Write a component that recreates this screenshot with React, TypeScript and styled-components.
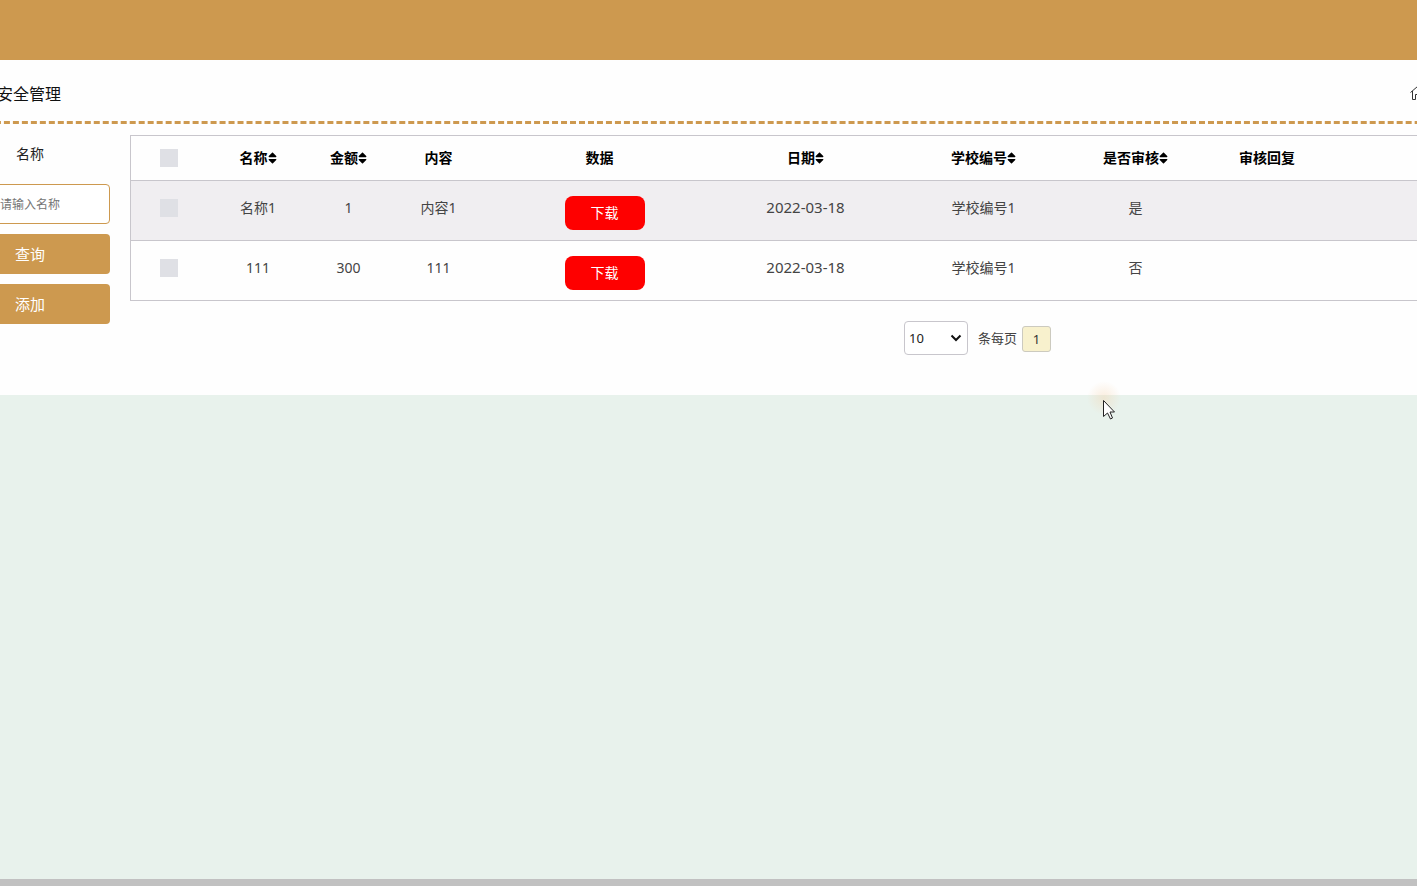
import React from "react";
import styled, { createGlobalStyle, css } from "styled-components";

const gold = "#cd994f";
const line = "#c8c6cc";

const GlobalStyle = createGlobalStyle`
  * { box-sizing: border-box; }
  body {
    margin: 0;
    background: #e8f2ec;
    color: #444;
    font-family: "Noto Sans", "Noto Sans CJK SC", sans-serif;
    font-size: 14px;
    line-height: 20px;
  }
  button, input, select { font: inherit; }
`;

const Viewport = styled.div`
  position: relative;
  display: flex;
  flex-direction: column;
  min-height: 100vh;
  overflow: hidden;
`;

const TopBar = styled.header`
  height: 60px;
  background: ${gold};
`;

/* The page is wider than the window and scrolled sideways. */
const Panel = styled.main`
  width: calc(100% + 458px);
  margin-left: -50px;
  padding-bottom: 40px;
  background: #fefefe;
`;

const TitleBar = styled.div`
  display: flex;
  align-items: center;
  justify-content: space-between;
  height: 64px;
  padding: 6px 400px 0 47px;
  border-bottom: 3px dashed ${gold};
`;

const Title = styled.h1`
  margin: 0;
  color: #111;
  font-size: 16px;
  font-weight: 400;
  line-height: 24px;
`;

const HomeLink = styled.a`
  display: flex;
  color: #333;
`;

const Content = styled.div`
  display: flex;
  gap: 20px;
  padding-top: 10px;
`;

const Filters = styled.form`
  display: flex;
  flex-direction: column;
  flex: none;
  gap: 10px;
  width: 160px;
`;

const FilterLabel = styled.label`
  color: #222;
  line-height: 40px;
  text-align: center;
`;

const FilterInput = styled.input`
  height: 40px;
  border: 1px solid ${gold};
  border-radius: 4px;
  background: #fff;
  font-size: 12px;
  text-align: center;
  &::placeholder { color: #757575; }
`;

const FilterButton = styled.button`
  height: 40px;
  padding: 0;
  border: 0;
  border-radius: 4px;
  background: ${gold};
  color: #fff;
  font-size: 15px;
`;

const Records = styled.section`
  flex: 1;
  padding-top: 1px;
`;

const Table = styled.table`
  width: 100%;
  border: 1px solid ${line};
  border-spacing: 0;
  table-layout: fixed;
`;

const Col = styled.col<{ $width?: number }>`
  ${(p) => p.$width && css`width: ${p.$width}px;`}
`;

const HeadCell = styled.th`
  height: 45px;
  padding: 0;
  border-bottom: 1px solid ${line};
  color: #000;
  font-weight: 700;
  vertical-align: middle;
`;

const Cell = styled.td<{ $large?: boolean }>`
  height: 60px;
  padding: 17px 0 0;
  font-size: ${(p) => (p.$large ? 15 : 14)}px;
  line-height: ${(p) => (p.$large ? 18 : 20)}px;
  text-align: center;
  vertical-align: top;
`;

const ActionCell = styled(Cell)`
  padding: 15px 0 0 10px;
`;

const Row = styled.tr<{ $shaded?: boolean }>`
  background: ${(p) => (p.$shaded ? "#f0eef1" : "#fefefe")};
  &:not(:last-child) td { border-bottom: 1px solid ${line}; }
  &:last-child td { height: 59px; }
`;

const Check = styled.input`
  display: block;
  width: 18px;
  height: 18px;
  margin: 1px auto;
  appearance: none;
  background: #dfe0e5;
`;

const SortButton = styled.button`
  display: inline-flex;
  align-items: center;
  padding: 0;
  border: 0;
  background: none;
  color: inherit;
`;

const DownloadButton = styled.button`
  display: block;
  width: 80px;
  height: 34px;
  margin: 0 auto;
  padding: 0;
  border: 0;
  border-radius: 8px;
  background: #fe0000;
  color: #fff;
`;

const Pagination = styled.nav`
  display: flex;
  align-items: center;
  justify-content: center;
  margin-top: 20px;
  font-size: 13px;
`;

const PageSizeLabel = styled.label`
  display: flex;
  align-items: center;
  gap: 10px;
`;

const SelectBox = styled.span`
  display: grid;
  align-items: center;
  > * { grid-area: 1 / 1; }
  > svg {
    justify-self: end;
    margin-right: 6px;
    pointer-events: none;
  }
`;

const PageSize = styled.select`
  width: 64px;
  height: 34px;
  padding: 0 4px;
  appearance: none;
  border: 1px solid ${line};
  border-radius: 4px;
  background: #fff;
  color: #222;
`;

const PageButton = styled.button`
  width: 29px;
  height: 26px;
  margin: 2px 0 0 5px;
  padding: 0;
  border: 1px solid #cccabf;
  border-radius: 3px;
  background: #f8f1cd;
  color: #333;
`;

const Scrollbar = styled.div`
  height: 7px;
  margin-top: auto;
  background: #c1c1c1;
`;

const Pointer = styled.svg`
  position: absolute;
  top: 380px;
  left: 1086px;
  pointer-events: none;
`;

const SortIcon = () => (
  <svg width="9" height="14" viewBox="0 0 320 512" fill="currentColor" aria-hidden="true">
    <path d="M41 288h238c21.4 0 32.1 25.9 17 41L177 448c-9.4 9.4-24.6 9.4-33.9 0L24 329c-15.1-15.1-4.4-41 17-41zm255-105L177 64c-9.4-9.4-24.6-9.4-33.9 0L24 183c-15.1 15.1-4.4 41 17 41h238c21.4 0 32.1-25.9 17-41z" />
  </svg>
);

const HomeIcon = () => (
  <svg width="15" height="16" viewBox="0 0 15 16" fill="none" stroke="currentColor" aria-hidden="true">
    <path d="M.5 6.500 7.500.5 14.500 6.500M2.500 5V13.500H5.500V8.500H9.500V13.500H12.500V5" />
  </svg>
);

const ChevronIcon = () => (
  <svg width="12" height="8" viewBox="0 0 12 8" fill="none" stroke="#111" strokeWidth="2" aria-hidden="true">
    <path d="M1.500 1.500 6 6 10.500 1.500" />
  </svg>
);

const columns = [
  { title: "名称", width: 102, sortable: true },
  { title: "金额", width: 79, sortable: true },
  { title: "内容", width: 101 },
  { title: "数据", width: 221 },
  { title: "日期", width: 191, sortable: true },
  { title: "学校编号", width: 165, sortable: true },
  { title: "是否审核", width: 139, sortable: true },
  { title: "审核回复", width: 124 },
];

const records = [
  { name: "名称1", amount: "1", content: "内容1", date: "2022-03-18", school: "学校编号1", reviewed: "是" },
  { name: "111", amount: "300", content: "111", date: "2022-03-18", school: "学校编号1", reviewed: "否" },
];

export default function App() {
  return (
    <>
      <GlobalStyle />
      <Viewport>
        <TopBar />
        <Panel>
          <TitleBar>
            <Title>安全管理</Title>
            <HomeLink href="#" aria-label="首页"><HomeIcon /></HomeLink>
          </TitleBar>
          <Content>
            <Filters onSubmit={(e) => e.preventDefault()}>
              <FilterLabel htmlFor="name">名称</FilterLabel>
              <FilterInput id="name" placeholder="请输入名称" />
              <FilterButton type="submit">查询</FilterButton>
              <FilterButton type="button">添加</FilterButton>
            </Filters>
            <Records>
              <Table>
                <colgroup>
                  <Col $width={76} />
                  {columns.map((c) => <Col key={c.title} $width={c.width} />)}
                  <Col />
                </colgroup>
                <thead>
                  <tr>
                    <HeadCell><Check type="checkbox" aria-label="全选" /></HeadCell>
                    {columns.map((c) => (
                      <HeadCell key={c.title} scope="col">
                        {c.sortable ? <SortButton type="button">{c.title}<SortIcon /></SortButton> : c.title}
                      </HeadCell>
                    ))}
                    <HeadCell />
                  </tr>
                </thead>
                <tbody>
                  {records.map((r, i) => (
                    <Row key={r.name} $shaded={i % 2 === 0}>
                      <Cell><Check type="checkbox" aria-label={r.name} /></Cell>
                      <Cell>{r.name}</Cell>
                      <Cell>{r.amount}</Cell>
                      <Cell>{r.content}</Cell>
                      <ActionCell><DownloadButton type="button">下载</DownloadButton></ActionCell>
                      <Cell $large>{r.date}</Cell>
                      <Cell>{r.school}</Cell>
                      <Cell>{r.reviewed}</Cell>
                      <Cell />
                      <Cell />
                    </Row>
                  ))}
                </tbody>
              </Table>
              <Pagination>
                <PageSizeLabel>
                  <SelectBox>
                    <PageSize defaultValue="10">
                      <option>10</option>
                      <option>25</option>
                      <option>50</option>
                    </PageSize>
                    <ChevronIcon />
                  </SelectBox>
                  条每页
                </PageSizeLabel>
                <PageButton type="button">1</PageButton>
              </Pagination>
            </Records>
          </Content>
        </Panel>
        <Scrollbar />
        <Pointer width="36" height="44" viewBox="0 0 36 44" aria-hidden="true">
          <defs>
            <radialGradient id="glow">
              <stop offset="0" stopColor="#f5d3ad" stopOpacity=".4" />
              <stop offset="1" stopColor="#f5d3ad" stopOpacity="0" />
            </radialGradient>
          </defs>
          <circle cx="18" cy="18" r="17" fill="url(#glow)" />
          <path d="M17.500 20.500V36.500L21.500 33L24.500 39L26.500 38L24 32H28.500Z" fill="#fff" stroke="#222" />
        </Pointer>
      </Viewport>
    </>
  );
}
